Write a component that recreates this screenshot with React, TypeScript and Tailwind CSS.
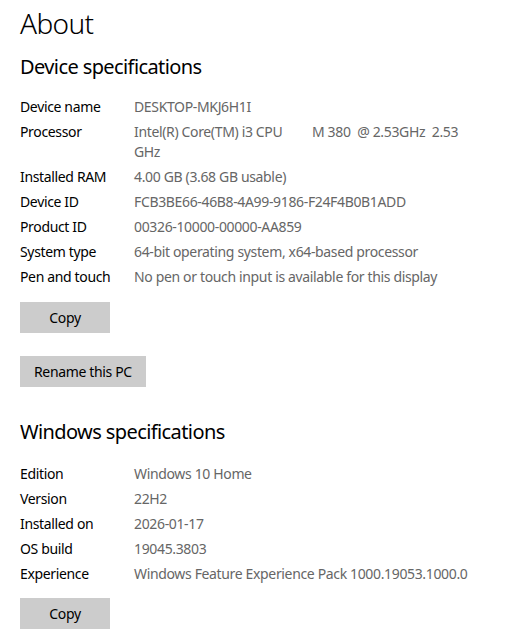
import React from "react";

const device: [string, React.ReactNode][] = [
  ["Device name", "DESKTOP-MKJ6H1I"],
  [
    "Processor",
    <>
      <span className="whitespace-pre">{"Intel(R) Core(TM) i3 CPU         M 380  @ 2.53GHz  2.53"}</span>
      <br />
      GHz
    </>,
  ],
  ["Installed RAM", "4.00 GB (3.68 GB usable)"],
  ["Device ID", "FCB3BE66-46B8-4A99-9186-F24F4B0B1ADD"],
  ["Product ID", "00326-10000-00000-AA859"],
  ["System type", "64-bit operating system, x64-based processor"],
  ["Pen and touch", "No pen or touch input is available for this display"],
];

const windows: [string, string][] = [
  ["Edition", "Windows 10 Home"],
  ["Version", "22H2"],
  ["Installed on", "2026-01-17"],
  ["OS build", "19045.3803"],
  ["Experience", "Windows Feature Experience Pack 1000.19053.1000.0"],
];

function Rows({ rows }: { rows: [string, React.ReactNode][] }) {
  return (
    <div className="flex flex-col gap-[5px]">
      {rows.map(([k, v]) => (
        <div key={k} className="flex text-[14px] leading-[20px] tracking-[-0.35px]">
          <div className="w-[114px] shrink-0 text-black">{k}</div>
          <div className="text-[#666666]">{v}</div>
        </div>
      ))}
    </div>
  );
}

function Btn({ children, w }: { children: React.ReactNode; w?: string }) {
  return (
    <button
      className={`h-[31px] bg-[#cccccc] text-[14px] tracking-[-0.35px] text-black flex items-center justify-center ${w ?? "px-[14px]"}`}
    >
      {children}
    </button>
  );
}

export default function App() {
  return (
    <div
      className="w-[528px] h-[636px] bg-white pl-[20px] overflow-hidden"
      style={{ fontFamily: '"Noto Sans", "Open Sans", sans-serif' }}
    >
      <h1 className="text-[28px] font-light leading-[36px] pt-[5px] text-black tracking-[-0.6px]">About</h1>
      <h2 className="text-[20px] leading-[28px] mt-[12px] text-black tracking-[-0.6px]">Device specifications</h2>
      <div className="mt-[16px]">
        <Rows rows={device} />
      </div>
      <div className="mt-[15px] flex">
        <Btn w="w-[90px]">Copy</Btn>
      </div>
      <div className="mt-[23px] flex">
        <Btn>Rename this PC</Btn>
      </div>
      <h2 className="text-[20px] leading-[28px] mt-[31px] text-black tracking-[-0.6px]">Windows specifications</h2>
      <div className="mt-[18px]">
        <Rows rows={windows} />
      </div>
      <div className="mt-[14px] flex">
        <Btn w="w-[90px]">Copy</Btn>
      </div>
    </div>
  );
}
